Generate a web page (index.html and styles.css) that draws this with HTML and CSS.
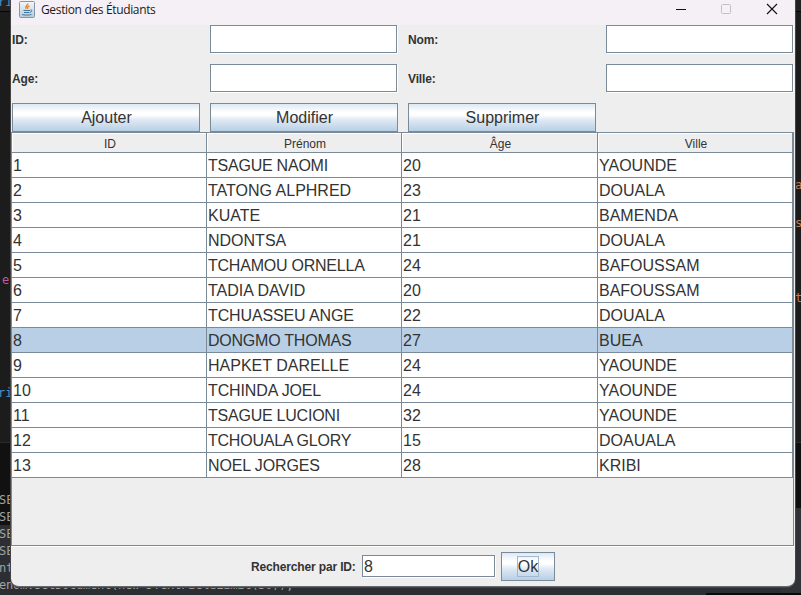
FILE: index.html
```html
<!DOCTYPE html>
<html lang="fr">
<head>
<meta charset="utf-8">
<title>Gestion des Étudiants</title>
<link rel="stylesheet" href="styles.css">
</head>
<body>
<div class="desktop">
  <div class="panel-top"></div><div class="panel-low"></div><div class="panel-right"></div><div class="panel-edge"></div>
  <span class="code blue c1">ri</span>
  <span class="code pink c2">e</span>
  <span class="code blue c3">ri</span>
  <span class="code c4">SE</span>
  <span class="code c5">SE</span>
  <span class="code c6">SE</span>
  <span class="code c7">SE</span>
  <span class="code c8">nt</span>
  <span class="code c9">enom.setDocument(new JTextFieldLimit(50));</span>
  <span class="code orange c10">a</span>
  <span class="code orange c11">s</span>
  <span class="code orange c12">t</span>
</div>
<main class="window">
  <header class="titlebar">
    <svg class="java" width="16" height="17" viewBox="0 0 16 17">
      <defs><linearGradient id="g" x2="0" y2="1"><stop offset="0" stop-color="#f4f7f9"/><stop offset="1" stop-color="#b9cad8"/></linearGradient></defs>
      <rect x=".5" y=".5" width="15" height="16" rx="1" fill="url(#g)" stroke="#8296a6"/>
      <path d="M8.800 2.500c.4 2-3.600 2.600-1.700 5.300M10.500 4.800c-2.700 1-2.200 1.800-1.500 3" fill="none" stroke="#e8812a" stroke-width="1.400"/>
      <path d="M4.500 9.500h6.500M5 11.500h5.500M3 13.500c2 .8 7 .8 9.500 0M11.500 9c2.300-.3 1.500 2-.5 2.300" fill="none" stroke="#41759c"/>
    </svg>
    <h1>Gestion des Étudiants</h1>
    <svg class="controls" width="104" height="12" viewBox="0 0 104 12">
      <path d="M0 6.500h10" stroke="#111"/>
      <rect x="45.500" y="1.500" width="9" height="9" rx="1" fill="none" stroke="#c3bfc4"/>
      <path d="M91 1l10 10M101 1L91 11" stroke="#111" stroke-width="1.100"/>
    </svg>
  </header>
  <form class="form">
    <label>ID:</label><div class="field"></div><label>Nom:</label><div class="field"></div>
    <label>Age:</label><div class="field"></div><label>Ville:</label><div class="field"></div>
    <button type="button">Ajouter</button><button type="button">Modifier</button><button type="button">Supprimer</button>
  </form>
  <section class="scroll">
    <div class="row head"><span>ID</span><span>Prénom</span><span>Âge</span><span>Ville</span></div>
    <div class="row"><span>1</span><span class="tight">TSAGUE NAOMI</span><span>20</span><span>YAOUNDE</span></div>
    <div class="row"><span>2</span><span>TATONG ALPHRED</span><span>23</span><span>DOUALA</span></div>
    <div class="row"><span>3</span><span>KUATE</span><span>21</span><span>BAMENDA</span></div>
    <div class="row"><span>4</span><span>NDONTSA</span><span>21</span><span>DOUALA</span></div>
    <div class="row"><span>5</span><span class="tight">TCHAMOU ORNELLA</span><span>24</span><span>BAFOUSSAM</span></div>
    <div class="row"><span>6</span><span>TADIA DAVID</span><span>20</span><span>BAFOUSSAM</span></div>
    <div class="row"><span>7</span><span class="snug">TCHUASSEU ANGE</span><span>22</span><span>DOUALA</span></div>
    <div class="row selected"><span>8</span><span class="tight">DONGMO THOMAS</span><span>27</span><span>BUEA</span></div>
    <div class="row"><span>9</span><span>HAPKET DARELLE</span><span>24</span><span>YAOUNDE</span></div>
    <div class="row"><span>10</span><span class="snug">TCHINDA JOEL</span><span>24</span><span>YAOUNDE</span></div>
    <div class="row"><span>11</span><span class="tight">TSAGUE LUCIONI</span><span>32</span><span>YAOUNDE</span></div>
    <div class="row"><span>12</span><span class="tight">TCHOUALA GLORY</span><span>15</span><span>DOAUALA</span></div>
    <div class="row"><span>13</span><span class="snug">NOEL JORGES</span><span>28</span><span>KRIBI</span></div>
  </section>
  <footer class="search">
    <label>Rechercher par ID:</label>
    <div class="field">8</div>
    <button type="button"><span class="focus">Ok</span></button>
  </footer>
</main>
</body>
</html>
```
FILE: styles.css
```css
* { box-sizing: border-box; }
body { margin: 0; width: 801px; height: 595px; overflow: hidden; background: #1c1c1c; font-family: "Liberation Sans", Arial, sans-serif; color: #333; }

/* Editor visible behind the dialog */
.desktop { position: absolute; inset: 0; overflow: hidden; }
.desktop > div { position: absolute; }
.panel-top { left: 0; top: 0; width: 801px; height: 12px; background: #222; border-bottom: 1px solid #050505; }
.panel-low { left: 0; top: 525px; width: 801px; height: 70px; background: #2c2e33; }
.panel-right { right: 0; top: 442px; width: 20px; height: 66px; background: #0f0f0f; border-top: 1px solid #2a2a2a; }
.panel-edge { right: 0; top: 508px; width: 20px; height: 85px; background: #303237; }
.desktop::before { content: ""; position: absolute; left: 0; top: 442px; width: 20px; height: 83px; background: #111; border-top: 1px solid #2a2a2a; }
.desktop::after { content: ""; position: absolute; right: 0; bottom: 0; width: 95px; height: 2px; background: #090909; }
.code { position: absolute; font: 12px/16px "DejaVu Sans Mono", monospace; color: #a2a39d; white-space: pre; }
.blue { color: #4a90c8; }
.pink { color: #b75ca5; }
.orange { color: #c9774f; }
.c1 { left: -2px; top: -6px; }
.c2 { left: 2px; top: 272px; }
.c3 { left: -2px; top: 385px; }
.c4 { left: -1px; top: 492px; }
.c5 { left: -1px; top: 509px; }
.c6 { left: -1px; top: 526px; }
.c7 { left: -1px; top: 543px; }
.c8 { left: -1px; top: 560px; }
.c9 { left: -1px; top: 577px; letter-spacing: -.22px; }
.c10 { left: 795px; top: 177px; }
.c11 { left: 795px; top: 215px; }
.c12 { left: 795px; top: 290px; }

.window { position: relative; width: 784px; height: 587px; margin-left: 11px; background: #eee; border-radius: 0 0 8px 8px; border-bottom: 1px solid #65686a; overflow: hidden; box-shadow: 0 0 0 1px #444; }
.titlebar { height: 25px; display: flex; align-items: flex-start; padding: 1px 15px 0 8px; background: #f4f0f6; }
.titlebar h1 { margin: 0 auto 0 6px; font: 12px/17px "Open Sans", "Noto Sans", sans-serif; color: #1b1b1b; letter-spacing: -.35px; }
.controls { margin-top: 2px; }

.form { display: grid; grid-template-columns: repeat(4, 188px); grid-auto-rows: 29px; gap: 10px; padding-left: 1px; height: 107px; }
label { font: bold 12px/31px "Liberation Sans", Arial, sans-serif; letter-spacing: -.15px; }
.field { background: #fff; border: 1px solid #7a8a99; margin: 0 1px 1px 0; box-shadow: 1px 1px #fff; }
button { padding: 0 0 0 1px; border: 1px solid #7a8a99; border-radius: 0; font: 16px/27px "Liberation Sans", Arial, sans-serif; color: #333; background: linear-gradient(#dde8f3 0, #fff 30%, #fff 40%, #dde8f3 60%, #b8cfe5 100%); }

.scroll { width: 783px; height: 414px; border: 1px solid #7a8a99; box-shadow: 0 1px #fff; }
.row { display: grid; grid-template-columns: 195px 195px 196px 195px; grid-template-rows: 100%; height: 25px; background: #fff; font-size: 16px; line-height: 26px; width: 781px; }
.row span { border-right: 1px solid #7a8a99; border-bottom: 1px solid #7a8a99; padding-left: 1px; white-space: nowrap; }
.row .tight { letter-spacing: -.23px; }
.row .snug { letter-spacing: -.13px; }
.selected { background: #b8cfe5; }
.head { height: 20px; font-size: 12px; line-height: 22px; background: #eee; text-align: center; }
.head span { box-shadow: inset 1px 1px #fff; padding-left: 2px; }

.search { display: flex; align-items: flex-start; padding: 6px 0 0 240px; }
.search label { width: 106px; white-space: nowrap; }
.search .field { width: 133px; height: 22px; margin: 3px 6px 0 5px; font-size: 16px; line-height: 22px; padding-left: 1px; }
.search button { width: 54px; height: 29px; padding: 0; }
.focus { display: inline-block; height: 21px; line-height: 19px; border: 1px solid #a3b8cc; }
```
